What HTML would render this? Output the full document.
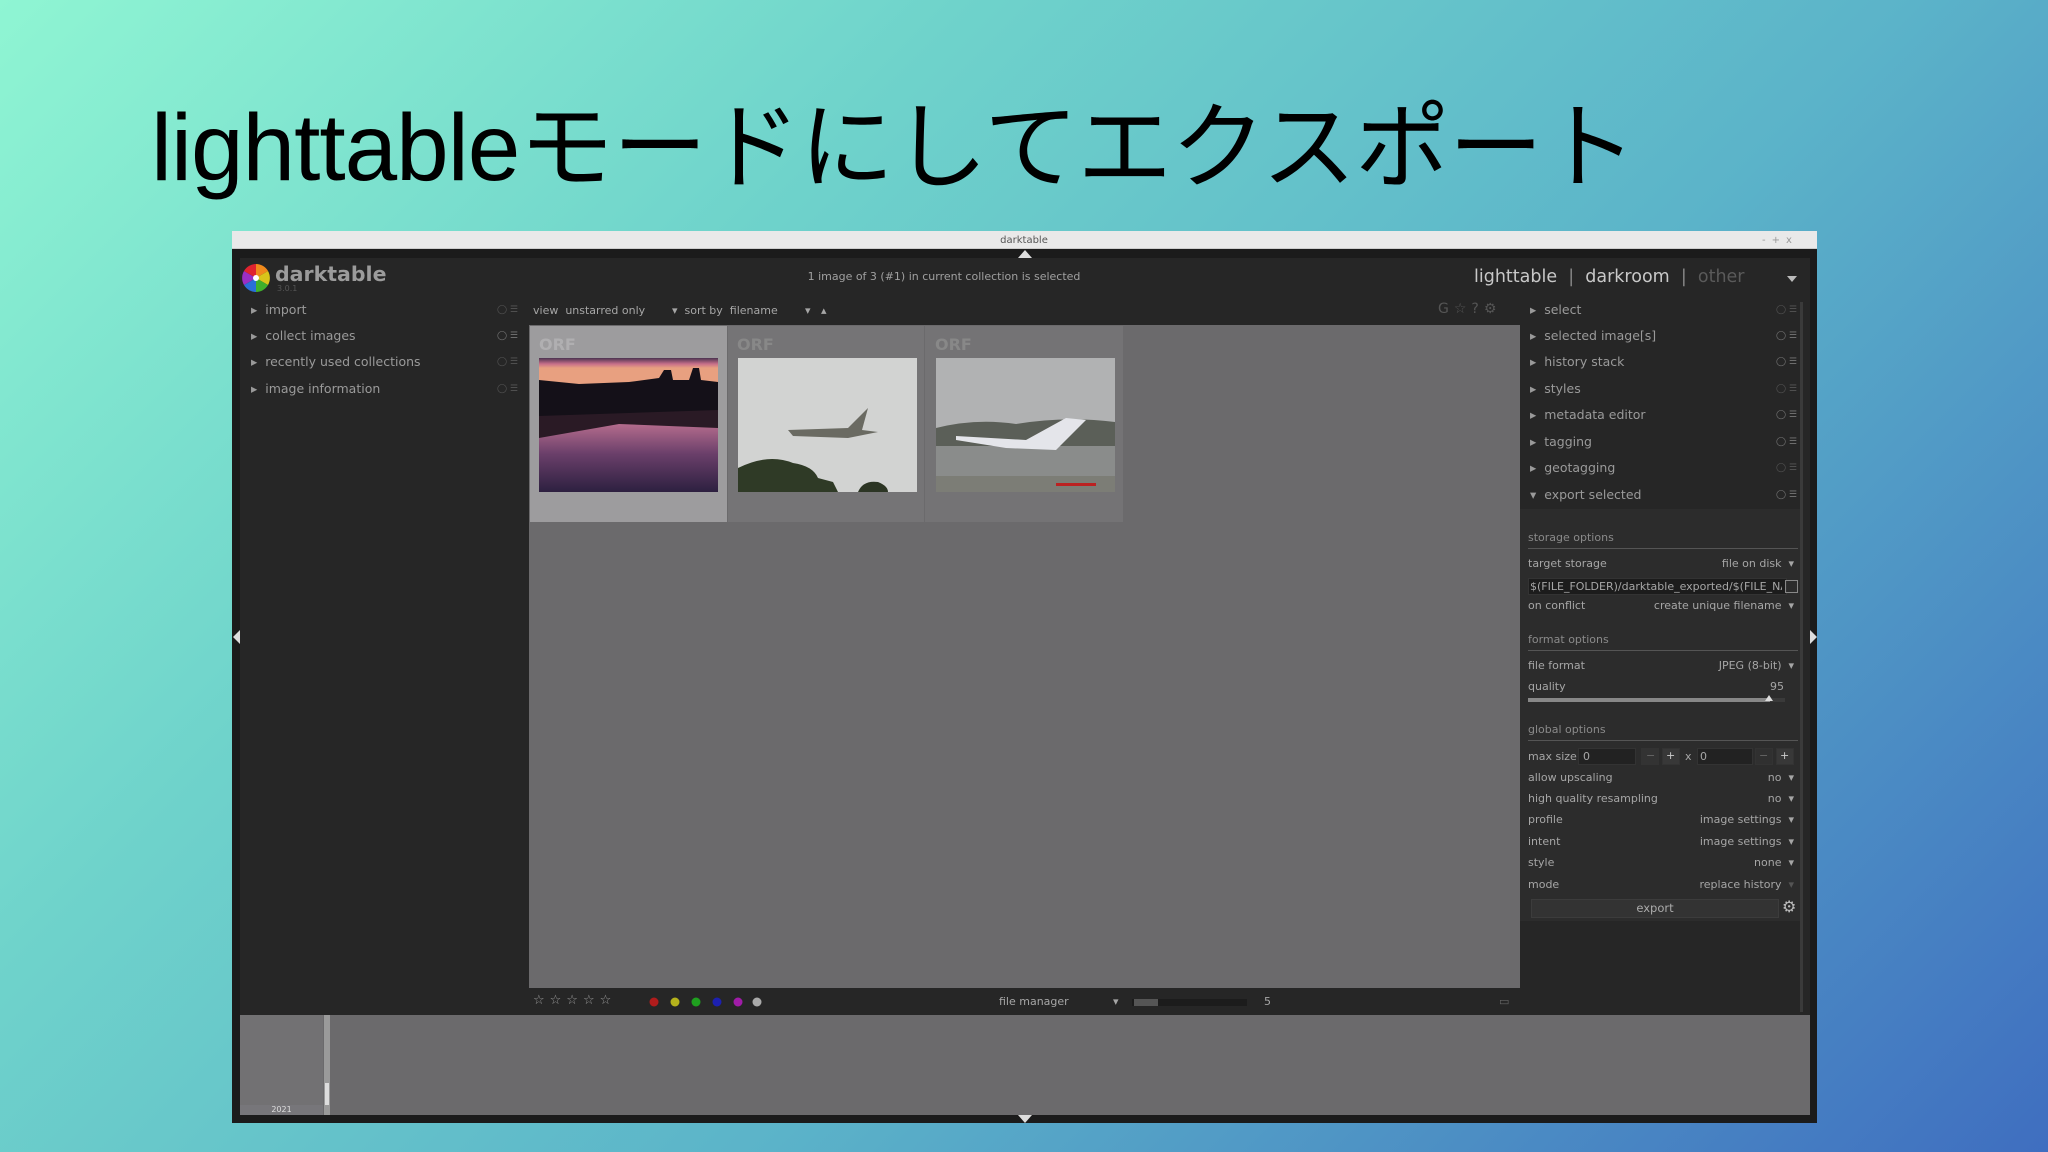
<!DOCTYPE html>
<html><head><meta charset="utf-8"><style>
*{margin:0;padding:0;box-sizing:border-box}
body{width:2048px;height:1152px;overflow:hidden;position:relative;font-family:"DejaVu Sans","Liberation Sans",sans-serif;
background:linear-gradient(135deg,#8ff5d3 0%,#6fd3cb 30%,#5bb3c9 60%,#3f6ec0 100%);}
.a{position:absolute;white-space:nowrap}
.t{font-size:12.5px;color:#9a9a9a}
.s{font-size:11px;color:#a6a6a6}
.h{font-size:11px;color:#8a8a8a}
.ic{font-size:9px;color:#555}
.ln{position:absolute;height:1px;background:#555}
.box{position:absolute;background:#1c1c1c;border:1px solid #333}
</style></head><body>
<div class="a" style="left:151px;top:71px;font-size:94.5px;color:#000;font-family:'Liberation Sans','Noto Sans CJK JP',sans-serif;letter-spacing:-1px">lighttableモードにしてエクスポート</div>

<div class="a" style="left:232px;top:231px;width:1585px;height:892px;background:#1b1b1b"></div>
<div class="a" style="left:232px;top:231px;width:1585px;height:18px;background:#e9e9e9;border-bottom:1px solid #ccc"></div>
<div class="a" style="left:0;width:2048px;top:235px;text-align:center;font-size:10px;color:#555">darktable</div>
<div class="a" style="left:1762px;top:235px;font-size:10px;color:#999;letter-spacing:6px">-+x</div>
<div class="a" style="left:1018px;top:250px;width:0;height:0;border-left:7px solid transparent;border-right:7px solid transparent;border-bottom:8px solid #ddd"></div>
<div class="a" style="left:240px;top:258px;width:1570px;height:757px;background:#262626"></div>
<svg class="a" style="left:241px;top:262px" width="30" height="32" viewBox="0 0 30 32">
<path d="M15 16 L15 2 A14 14 0 0 1 27 9 Z" fill="#f08a1c"/>
<path d="M15 16 L27 9 A14 14 0 0 1 27 23 Z" fill="#d9c51a"/>
<path d="M15 16 L27 23 A14 14 0 0 1 15 30 Z" fill="#3fb02c"/>
<path d="M15 16 L15 30 A14 14 0 0 1 3 23 Z" fill="#2a6fd8"/>
<path d="M15 16 L3 23 A14 14 0 0 1 3 9 Z" fill="#9a2fc4"/>
<path d="M15 16 L3 9 A14 14 0 0 1 15 2 Z" fill="#e0232f"/>
<circle cx="15" cy="16" r="3" fill="#fff"/></svg>
<div class="a" style="left:275px;top:262px;font-size:20.5px;font-weight:bold;color:#9b9b9b">darktable</div>
<div class="a" style="left:277px;top:284px;font-size:8px;color:#555">3.0.1</div>
<div class="a" style="left:0;width:1888px;text-align:center;top:270px;font-size:11px;color:#a0a0a0">1 image of 3 (#1) in current collection is selected</div>
<div class="a" style="left:1474px;top:267px;font-size:17.5px;color:#c8c8c8">lighttable <span style="color:#888">&nbsp;|&nbsp;</span> darkroom <span style="color:#888">&nbsp;|&nbsp;</span> <span style="color:#5a5a5a">other</span></div>
<div class="a" style="left:1787px;top:276px;width:0;height:0;border-left:5px solid transparent;border-right:5px solid transparent;border-top:6px solid #bbb"></div>

<div class="a" style="left:240px;top:300px;width:289px;height:715px;background:#262626"></div>
<div class="a t" style="left:251px;top:302px">▸ &nbsp;import</div>
<div class="a t" style="left:251px;top:328px">▸ &nbsp;collect images</div>
<div class="a t" style="left:251px;top:354px">▸ &nbsp;recently used collections</div>
<div class="a t" style="left:251px;top:381px">▸ &nbsp;image information</div>
<div class="a ic" style="left:497px;top:305px">◯ ☰</div>
<div class="a ic" style="left:497px;top:331px;color:#777">◯ ☰</div>
<div class="a ic" style="left:497px;top:357px">◯ ☰</div>
<div class="a ic" style="left:497px;top:384px">◯ ☰</div>

<div class="a s" style="left:533px;top:304px">view &nbsp;unstarred only</div>
<div class="a s" style="left:672px;top:304px">▾ &nbsp;sort by &nbsp;filename</div>
<div class="a s" style="left:805px;top:304px">▾ &nbsp;&nbsp;▴</div>
<div class="a" style="left:1438px;top:301px;font-size:14px;color:#555;letter-spacing:5px">G☆?⚙</div>

<div class="a" style="left:529px;top:325px;width:991px;height:663px;background:#6b6a6c"></div>
<div class="a" style="left:530px;top:326px;width:197px;height:196px;background:#9d9c9e"></div>
<div class="a" style="left:728px;top:326px;width:196px;height:196px;background:#757476"></div>
<div class="a" style="left:925px;top:326px;width:198px;height:196px;background:#747375"></div>
<div class="a" style="left:539px;top:335px;font-size:16px;font-weight:bold;color:#b0afb1">ORF</div>
<div class="a" style="left:737px;top:335px;font-size:16px;font-weight:bold;color:#888">ORF</div>
<div class="a" style="left:935px;top:335px;font-size:16px;font-weight:bold;color:#888">ORF</div>
<svg class="a" style="left:539px;top:358px" width="179" height="134" viewBox="0 0 179 134">
<defs><linearGradient id="g1" x1="0" y1="0" x2="0" y2="1"><stop offset="0" stop-color="#4b3350"/><stop offset=".15" stop-color="#c8708a"/><stop offset=".25" stop-color="#e8a080"/></linearGradient>
<linearGradient id="g2" x1="0" y1="0" x2="0" y2="1"><stop offset="0" stop-color="#c87896"/><stop offset=".5" stop-color="#6a3f6a"/><stop offset="1" stop-color="#2d2040"/></linearGradient></defs>
<rect width="179" height="40" fill="url(#g1)"/>
<path d="M0 40 L0 22 L40 26 L90 24 L120 20 L125 12 L132 12 L134 22 L150 22 L154 10 L160 10 L162 22 L179 24 L179 55 L0 60 Z" fill="#141018"/>
<rect y="58" width="179" height="76" fill="url(#g2)"/>
<path d="M0 58 L179 52 L179 70 L80 66 L0 80Z" fill="#2a1a25"/></svg>
<svg class="a" style="left:738px;top:358px" width="179" height="134" viewBox="0 0 179 134">
<rect width="179" height="134" fill="#d2d3d2"/>
<path d="M50 72 L110 70 L130 50 L124 72 L140 74 L110 80 L55 78Z" fill="#6a6a62"/>
<path d="M0 110 Q30 95 55 105 Q75 108 80 120 L95 124 L100 134 L0 134Z" fill="#2f3a26"/>
<path d="M120 134 Q125 122 140 124 Q150 128 150 134Z" fill="#2c3524"/></svg>
<svg class="a" style="left:936px;top:358px" width="179" height="134" viewBox="0 0 179 134">
<rect width="179" height="134" fill="#b1b2b3"/>
<path d="M0 70 Q40 60 80 66 Q130 58 179 64 L179 134 L0 134Z" fill="#5b5f58"/>
<rect y="88" width="179" height="30" fill="#8a8c8b"/>
<rect y="118" width="179" height="16" fill="#7c7d76"/>
<path d="M20 78 L90 82 L130 60 L150 62 L120 92 L70 90 L20 82Z" fill="#e4e5ea"/>
<rect x="120" y="125" width="40" height="3" fill="#b22"/></svg>

<div class="a" style="left:533px;top:993px;font-size:13px;color:#999;letter-spacing:5px">☆☆☆☆☆</div>
<svg class="a" style="left:648px;top:996px" width="115" height="12">
<circle cx="6" cy="6" r="4.5" fill="#b01c1c"/><circle cx="27" cy="6" r="4.5" fill="#b5b21c"/><circle cx="48" cy="6" r="4.5" fill="#1fa01f"/><circle cx="69" cy="6" r="4.5" fill="#1c20b0"/><circle cx="90" cy="6" r="4.5" fill="#a01ca8"/><circle cx="109" cy="6" r="4.5" fill="#aaa"/></svg>
<div class="a s" style="left:999px;top:995px">file manager</div>
<div class="a s" style="left:1113px;top:995px">▾</div>
<div class="a" style="left:1132px;top:999px;width:115px;height:7px;background:#1c1c1c"></div>
<div class="a" style="left:1134px;top:999px;width:24px;height:7px;background:#555"></div>
<div class="a s" style="left:1264px;top:995px">5</div>
<div class="a" style="left:1499px;top:995px;font-size:11px;color:#666">▭</div>

<div class="a" style="left:1520px;top:300px;width:283px;height:715px;background:#262626"></div>
<div class="a" style="left:1520px;top:509px;width:283px;height:412px;background:#2c2c2c"></div>
<div class="a" style="left:1800px;top:302px;width:3px;height:710px;background:#3a3a3a"></div>
<div class="a t" style="left:1530px;top:302px">▸ &nbsp;select</div>
<div class="a t" style="left:1530px;top:328px">▸ &nbsp;selected image[s]</div>
<div class="a t" style="left:1530px;top:354px">▸ &nbsp;history stack</div>
<div class="a t" style="left:1530px;top:381px">▸ &nbsp;styles</div>
<div class="a t" style="left:1530px;top:407px">▸ &nbsp;metadata editor</div>
<div class="a t" style="left:1530px;top:434px">▸ &nbsp;tagging</div>
<div class="a t" style="left:1530px;top:460px">▸ &nbsp;geotagging</div>
<div class="a t" style="left:1530px;top:487px">▾ &nbsp;export selected</div>
<div class="a ic" style="left:1776px;top:305px">◯ ☰</div>
<div class="a ic" style="left:1776px;top:331px;color:#777">◯ ☰</div>
<div class="a ic" style="left:1776px;top:357px;color:#777">◯ ☰</div>
<div class="a ic" style="left:1776px;top:384px">◯ ☰</div>
<div class="a ic" style="left:1776px;top:410px;color:#777">◯ ☰</div>
<div class="a ic" style="left:1776px;top:437px;color:#777">◯ ☰</div>
<div class="a ic" style="left:1776px;top:463px">◯ ☰</div>
<div class="a ic" style="left:1776px;top:490px;color:#777">◯ ☰</div>

<div class="a h" style="left:1528px;top:531px">storage options</div><div class="ln" style="left:1528px;top:548px;width:270px"></div>
<div class="a s" style="left:1528px;top:557px">target storage</div><div class="a s" style="right:254px;top:557px">file on disk &nbsp;▾</div>
<div class="box" style="left:1528px;top:578px;width:259px;height:17px"></div>
<div class="a s" style="left:1530px;top:580px;width:252px;overflow:hidden">$(FILE_FOLDER)/darktable_exported/$(FILE_NAME)</div>
<div class="a" style="left:1785px;top:580px;width:13px;height:13px;border:1px solid #888"></div>
<div class="a s" style="left:1528px;top:599px">on conflict</div><div class="a s" style="right:254px;top:599px">create unique filename &nbsp;▾</div>
<div class="a h" style="left:1528px;top:633px">format options</div><div class="ln" style="left:1528px;top:650px;width:270px"></div>
<div class="a s" style="left:1528px;top:659px">file format</div><div class="a s" style="right:254px;top:659px">JPEG (8-bit) &nbsp;▾</div>
<div class="a s" style="left:1528px;top:680px">quality</div><div class="a s" style="right:264px;top:680px">95</div>
<div class="a" style="left:1528px;top:698px;width:242px;height:4px;background:#888"></div>
<div class="a" style="left:1770px;top:698px;width:15px;height:4px;background:#3a3a3a"></div>
<div class="a" style="left:1765px;top:695px;width:0;height:0;border-left:4px solid transparent;border-right:4px solid transparent;border-bottom:6px solid #ddd"></div>
<div class="a h" style="left:1528px;top:723px">global options</div><div class="ln" style="left:1528px;top:740px;width:270px"></div>
<div class="a s" style="left:1528px;top:750px">max size</div>
<div class="box" style="left:1578px;top:748px;width:58px;height:17px;background:#222"></div>
<div class="a s" style="left:1583px;top:750px">0</div>
<div class="box" style="left:1641px;top:748px;width:18px;height:17px;background:#333"></div><div class="a s" style="left:1646px;top:749px;color:#666">−</div>
<div class="box" style="left:1662px;top:748px;width:18px;height:17px;background:#383838"></div><div class="a s" style="left:1666px;top:749px;color:#ccc">+</div>
<div class="a s" style="left:1685px;top:750px">x</div>
<div class="box" style="left:1697px;top:748px;width:56px;height:17px;background:#222"></div><div class="a s" style="left:1700px;top:750px">0</div>
<div class="box" style="left:1755px;top:748px;width:18px;height:17px;background:#303030"></div><div class="a s" style="left:1759px;top:749px;color:#666">−</div>
<div class="box" style="left:1776px;top:748px;width:18px;height:17px;background:#383838"></div><div class="a s" style="left:1780px;top:749px;color:#ccc">+</div>
<div class="a s" style="left:1528px;top:771px">allow upscaling</div><div class="a s" style="right:254px;top:771px">no &nbsp;▾</div>
<div class="a s" style="left:1528px;top:792px">high quality resampling</div><div class="a s" style="right:254px;top:792px">no &nbsp;▾</div>
<div class="a s" style="left:1528px;top:813px">profile</div><div class="a s" style="right:254px;top:813px">image settings &nbsp;▾</div>
<div class="a s" style="left:1528px;top:835px">intent</div><div class="a s" style="right:254px;top:835px">image settings &nbsp;▾</div>
<div class="a s" style="left:1528px;top:856px">style</div><div class="a s" style="right:254px;top:856px">none &nbsp;▾</div>
<div class="a s" style="left:1528px;top:878px">mode</div><div class="a s" style="right:254px;top:878px">replace history &nbsp;<span style="color:#555">▾</span></div>
<div class="a" style="left:1531px;top:899px;width:248px;height:19px;background:#333;border:1px solid #3c3c3c;text-align:center;font-size:11.5px;color:#aaa;line-height:17px">export</div>
<div class="a" style="left:1782px;top:897px;font-size:16px;color:#bbb">⚙</div>

<div class="a" style="left:233px;top:630px;width:0;height:0;border-top:7px solid transparent;border-bottom:7px solid transparent;border-right:7px solid #ddd"></div>
<div class="a" style="left:1810px;top:630px;width:0;height:0;border-top:7px solid transparent;border-bottom:7px solid transparent;border-left:7px solid #ddd"></div>

<div class="a" style="left:240px;top:1015px;width:1570px;height:100px;background:#6b6a6c"></div>
<div class="a" style="left:240px;top:1015px;width:83px;height:98px;background:#727173"></div>
<div class="a" style="left:240px;top:1105px;width:83px;height:10px;background:#77767a;font-size:8px;color:#ddd;text-align:center">2021</div>
<div class="a" style="left:324px;top:1015px;width:6px;height:100px;background:#9a9a9a"></div>
<div class="a" style="left:325px;top:1083px;width:4px;height:22px;background:#ddd"></div>
<div class="a" style="left:1018px;top:1115px;width:0;height:0;border-left:7px solid transparent;border-right:7px solid transparent;border-top:8px solid #ddd"></div>
</body></html>
